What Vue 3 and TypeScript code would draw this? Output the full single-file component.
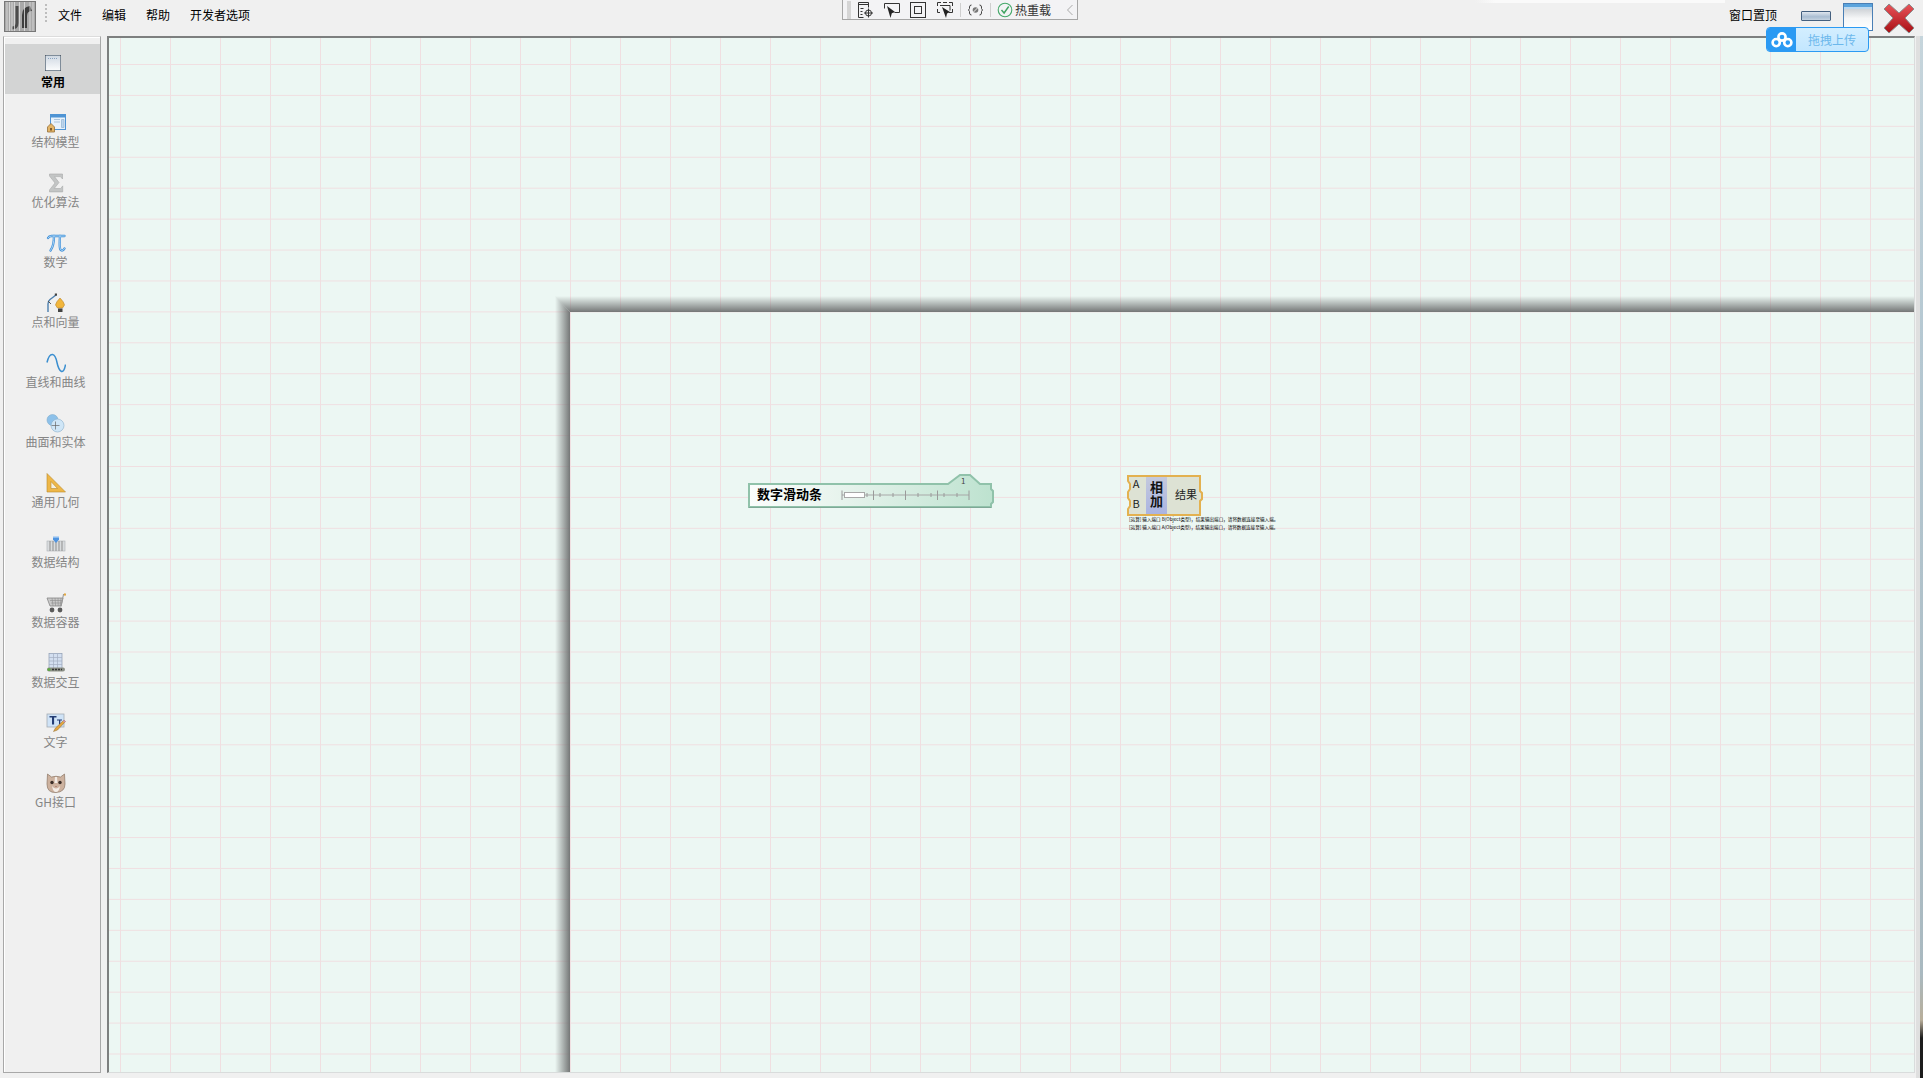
<script setup lang="ts">
const menus = ['文件', '编辑', '帮助', '开发者选项'];

const navItems = [
  { key: 'common', label: '常用' },
  { key: 'model', label: '结构模型' },
  { key: 'sigma', label: '优化算法' },
  { key: 'pi', label: '数学' },
  { key: 'point', label: '点和向量' },
  { key: 'curve', label: '直线和曲线' },
  { key: 'solid', label: '曲面和实体' },
  { key: 'ruler', label: '通用几何' },
  { key: 'struct', label: '数据结构' },
  { key: 'cart', label: '数据容器' },
  { key: 'table', label: '数据交互' },
  { key: 'text', label: '文字' },
  { key: 'cat', label: 'GH接口' },
];

// slider ticks, in px along the node
const majorTicks = [842, 873.5, 905.5, 937.5, 969];
const minorTicks = [867, 880, 893, 918, 931, 944, 957];
</script>

<template>
  <div class="app">
    <header class="topbar">
      <div class="top-left">
        <svg class="logo" width="32" height="31" viewBox="0 0 32 31">
          <rect x="0.5" y="0.5" width="31" height="30" fill="#a9a9a9" stroke="#777" />
          <path d="M13 5v17q0 5-5 5" fill="none" stroke="#4c4c4c" stroke-width="3" />
          <path d="M18 27V14q0-8 8-9l2 5q-5 0-5 5v12z" fill="#3e3e3e" />
          <path d="M3 1v29M5.500 1v29M8 1v29M10.500 1v29M15.500 1v29M20.500 1v29M26 1v29M29 1v29" stroke="#e0e0e0" stroke-width="1" opacity="0.8" />
        </svg>
        <div class="gripper"></div>
        <nav class="menu">
          <span v-for="m in menus" :key="m">{{ m }}</span>
        </nav>
      </div>

      <div class="toolbar">
        <div class="tool-grip"></div>
        <div class="tool-icons">
          <svg width="18" height="18" viewBox="0 0 18 18" fill="none" stroke="#333">
            <path d="M2.500 1.500h10M2.500 3.500h10" />
            <path d="M2.500 1.500v15h5M12.500 1.500v5" />
            <path d="M4.500 7.500h3M4.500 10.500h2M4.500 13.500h2" />
            <circle cx="12.500" cy="12" r="3" />
            <path d="M12.500 7.500v9M8 12h9" />
          </svg>
          <svg width="18" height="18" viewBox="0 0 18 18" fill="none" stroke="#333">
            <path d="M1.500 7.500V2.500h15v9h-5" />
            <path d="M4 5l8 6-3.200 1.200L7.500 17z" fill="#222" stroke="none" />
          </svg>
          <svg width="18" height="18" viewBox="0 0 18 18" fill="none" stroke="#333">
            <rect x="1.500" y="1.500" width="15" height="15" />
            <rect x="5.500" y="5.500" width="7" height="7" />
          </svg>
          <svg width="18" height="18" viewBox="0 0 18 18" fill="none" stroke="#333">
            <path d="M5 1.500H1.500V5M13 1.500h3.500V5M1.500 8v3.500H4M16.500 8v3.500H13M7 1.500h4" />
            <path d="M4 4.500h10v5" />
            <path d="M6 6l8 5-3 1.500-1 4.500z" fill="#222" stroke="none" />
          </svg>
        </div>
        <i class="tool-sep sep-a"></i>
        <svg class="tool-var" width="15" height="18" viewBox="0 0 15 18" fill="none" stroke="#444">
          <path d="M3.500 4Q1.500 4 1.500 6v1.500L.5 9l1 1.500V12q0 2 2 2M11.500 4q2 0 2 2v1.500l1 1.500-1 1.500V12q0 2-2 2" />
          <circle cx="7.500" cy="9" r="2.800" fill="#777" stroke="none" />
          <path d="M5.500 11l4-4" stroke="#eee" />
        </svg>
        <i class="tool-sep sep-b"></i>
        <svg class="tool-check" width="16" height="16" viewBox="0 0 16 16" fill="none">
          <circle cx="8" cy="8" r="6.800" stroke="#45a86a" stroke-width="1.100" />
          <path d="M4.500 8l2.600 3 4.600-6.500" stroke="#3ea35f" stroke-width="1.400" />
        </svg>
        <span class="tool-label">热重载</span>
        <svg class="tool-chev" width="10" height="14" viewBox="0 0 10 14" fill="none" stroke="#aaa">
          <path d="M7.500 2L2.500 7l5 5" />
        </svg>
      </div>

      <div class="top-right">
        <span class="pin-label">窗口置顶</span>
        <div class="win-min"></div>
        <div class="win-max"></div>
        <svg class="win-close" width="32" height="32" viewBox="0 0 32 32">
          <defs>
            <linearGradient id="closeFill" x1="0" y1="0" x2="0" y2="1">
              <stop offset="0" stop-color="#e8545a" />
              <stop offset="1" stop-color="#a80f14" />
            </linearGradient>
          </defs>
          <path d="M6 2l10 9L26 2l5 5-9 9 9 10-5 5-10-9-10 9-5-5 9-10-9-9z" fill="url(#closeFill)" stroke="#8c8c8c" stroke-width="1" />
        </svg>
      </div>

      <div class="top-glow"></div>

      <div class="upload">
        <div class="upload-icon">
          <svg width="22" height="16" viewBox="0 0 22 16" fill="none" stroke="#fff" stroke-width="2.600">
            <circle cx="11" cy="5" r="3.600" />
            <circle cx="5.200" cy="10.600" r="3.600" />
            <circle cx="16.800" cy="10.600" r="3.600" />
          </svg>
        </div>
        <span class="upload-text">拖拽上传</span>
      </div>
    </header>

    <main class="body">
      <aside class="sidebar">
        <div v-for="item in navItems" :key="item.key" class="nav-item" :class="{ active: item.key === 'common' }">
          <svg width="20" height="20" viewBox="0 0 20 20">
            <template v-if="item.key === 'common'">
              <defs>
                <linearGradient id="commonFill" x1="0" y1="0" x2="0" y2="1">
                  <stop offset="0" stop-color="#cfd8e2" />
                  <stop offset="1" stop-color="#fbfcfd" />
                </linearGradient>
              </defs>
              <rect x="2.500" y="2.500" width="15" height="15" fill="url(#commonFill)" stroke="#7f8c99" />
              <path d="M5 5.500h10" stroke="#8aa3bf" stroke-dasharray="1 1" />
              <path d="M2 2h1v1H2zM17 2h1v1h-1zM2 17h1v1H2zM17 17h1v1h-1z" fill="#56616d" />
            </template>
            <template v-else-if="item.key === 'model'">
              <rect x="4.500" y="1.500" width="15" height="15" fill="#e8f2fb" stroke="#4f94d4" />
              <rect x="4.500" y="1.500" width="15" height="3" fill="#4f94d4" />
              <path d="M8 6.500h6M8 9h6M15.500 6.500h2.500v8h-2.500z" stroke="#9cb9d4" fill="#bcd6ee" stroke-width="0.800" />
              <path d="M1.500 14l3.500-3.500 3.500 3.500v5h-7z" fill="#e3b567" stroke="#96703a" stroke-width="0.800" />
              <rect x="4" y="15" width="2" height="2.500" fill="#7d5a2c" />
            </template>
            <template v-else-if="item.key === 'sigma'">
              <path d="M3.500 1h13v5l-2-2.400H8.500L13 9.500l-4.800 6h6.500l2-2.600v6H3.500v-2L9 10 3.500 3z" fill="#c3c5c5" stroke="#a8aaaa" stroke-width="0.600" />
            </template>
            <template v-else-if="item.key === 'pi'">
              <g fill="none" stroke-linecap="round">
                <g stroke="#3f8fd8" stroke-width="2.300">
                  <path d="M2 5q1-2 3.500-2H18.500" />
                  <path d="M8 3Q8 13 4.500 17.500" />
                  <path d="M14 3Q13.500 10 13.800 14q.2 3.500 2.200 3.500 1.500 0 2.500-2" />
                </g>
                <g stroke="#b4daf7" stroke-width="0.900">
                  <path d="M2 5q1-2 3.500-2H18.500" />
                  <path d="M8 3Q8 13 4.500 17.500" />
                  <path d="M14 3Q13.500 10 13.800 14q.2 3.500 2.200 3.500 1.500 0 2.500-2" />
                </g>
              </g>
            </template>
            <template v-else-if="item.key === 'point'">
              <path d="M2 19V11q0-3 2-4.500L10 2" fill="none" stroke="#4c7fae" stroke-width="1.400" />
              <path d="M2 8l3 3" stroke="#555" />
              <rect x="8.800" y="0.500" width="2.200" height="2.200" fill="#444" />
              <path d="M14 5q4 4 4.500 7l-2 3h-5l-2-3q.5-3 4.500-7z" fill="#f2b63c" stroke="#b9832a" stroke-width="0.600" />
              <rect x="12" y="15.500" width="4.500" height="3.500" fill="#444" />
            </template>
            <template v-else-if="item.key === 'curve'">
              <path d="M1 9.500Q3 1 6.500 1.500q3 .5 4.500 8t4.500 9q2.800.2 4-7" fill="none" stroke="#3b8fd0" stroke-width="1.500" />
            </template>
            <template v-else-if="item.key === 'solid'">
              <circle cx="6.500" cy="7" r="5.500" fill="#8dc1ea" stroke="#7faccc" stroke-width="0.600" />
              <circle cx="11.500" cy="12.500" r="6.500" fill="#cfe6f7" stroke="#8ab0cc" stroke-width="0.600" />
              <path d="M9.500 8.500v8M5.500 12.500h8" stroke="#666" stroke-width="0.700" />
            </template>
            <template v-else-if="item.key === 'ruler'">
              <path d="M1 0.500L19.500 19H1z" fill="#eeb748" stroke="#b98a2e" stroke-width="0.600" />
              <path d="M5 8.500L11.500 15.500H5z" fill="#f5f0e0" stroke="#b98a2e" stroke-width="0.600" />
            </template>
            <template v-else-if="item.key === 'struct'">
              <rect x="1" y="8" width="18" height="10" fill="#d9dcde" stroke="#adb2b6" stroke-width="0.600" />
              <path d="M4 8v10M7 8v10M10 8v10M13 8v10M16 8v10" stroke="#8f8f8f" />
              <path d="M7 4.500h6v2L10 10 7 6.500z" fill="#4f94e0" />
              <rect x="7" y="3.500" width="6" height="1.500" fill="#8bbcef" />
            </template>
            <template v-else-if="item.key === 'cart'">
              <path d="M1 5h16l-2 8H4z" fill="#c9c9c9" stroke="#858585" stroke-width="0.800" />
              <path d="M4 7.500h12M5 10h10M6 5l1 8M9 5l.6 8M12 5l.2 8M15 5l-.8 8" stroke="#8d8d8d" stroke-width="0.600" />
              <path d="M15 13.500l2.500-12H19" fill="none" stroke="#999" stroke-width="1.100" />
              <circle cx="19" cy="1.500" r="1.200" fill="#e2a845" />
              <circle cx="6" cy="17" r="2.400" fill="#5a5a5a" />
              <circle cx="14" cy="17" r="2.400" fill="#5a5a5a" />
            </template>
            <template v-else-if="item.key === 'table'">
              <rect x="3" y="0.500" width="13" height="15" fill="#d3dff0" stroke="#8e9cb3" stroke-width="0.700" />
              <path d="M3 4.500h13M3 8h13M3 11.500h13M7.500 1v14M11.500 1v14" stroke="#a3afc2" stroke-width="0.700" />
              <rect x="1" y="14.500" width="18" height="4" rx="2" fill="#8b8f86" />
              <circle cx="3" cy="16.500" r="1.600" fill="#5fa844" />
              <path d="M6 16.500h10" stroke="#333" stroke-dasharray="2 1" stroke-width="1.400" />
            </template>
            <template v-else-if="item.key === 'text'">
              <rect x="1" y="1" width="17" height="13" fill="#cfe3f7" stroke="#a5adb5" stroke-width="0.800" />
              <path d="M3.500 3h7v1.600h-2.400v7H6v-7H3.500zM11 6.500h5v1h-1.700v4H13v-4h-2z" fill="#253d74" />
              <path d="M7.500 18.500l2-3.500 8.500-8 1.500 1.500-8 8.500z" fill="#e5a63f" stroke="#8c6a2d" stroke-width="0.500" />
              <path d="M18 7l1.500 1.500-1 1L17 8z" fill="#c98fc9" />
            </template>
            <template v-else>
              <path d="M1.500 1l4 3q4.500-1.500 9 0l4-3 .5 10q0 8-9 8.500t-9-8.500z" fill="#cdb29f" stroke="#8b7564" stroke-width="0.700" />
              <path d="M9 4h2l.5 6h-3zM6 13q4 5 8 0q-1 6-4 6t-4-6z" fill="#f3ece6" />
              <circle cx="6" cy="9.500" r="1.700" fill="#3a2e28" />
              <circle cx="14" cy="9.500" r="1.700" fill="#3a2e28" />
              <path d="M9 13h2l-1 1z" fill="#9a5a52" />
            </template>
          </svg>
          <span class="nav-label">{{ item.label }}</span>
        </div>
      </aside>

      <section class="canvas">
        <div class="sheet"></div>

        <svg class="node node-slider" width="248" height="38" viewBox="748 472 248 38">
          <defs>
            <linearGradient id="sliderFill" x1="0" y1="0" x2="1" y2="0">
              <stop offset="0" stop-color="#fbfdfc" />
              <stop offset="0.4" stop-color="#e6f3ec" />
              <stop offset="1" stop-color="#bde2cf" />
            </linearGradient>
          </defs>
          <path d="M749 484H948L960 475H970L980 484H991V489L993 491V502L991 504V507H749Z" fill="url(#sliderFill)" stroke="#90c2aa" stroke-width="2" />
          <path d="M749 507.500H991" stroke="#7fa896" stroke-width="1" />
          <text x="757" y="499" class="slider-title">数字滑动条</text>
          <text x="961" y="484" class="slider-value">1</text>
          <path d="M842 495H969" stroke="#a8a8a8" />
          <path v-for="x in majorTicks" :key="x" :d="`M${x} 490.500V500`" stroke="#9a9a9a" />
          <path v-for="x in minorTicks" :key="x" :d="`M${x} 493V497`" stroke="#9a9a9a" />
          <rect x="844.500" y="492.500" width="20" height="5" fill="#fff" stroke="#a8a8a8" />
        </svg>

        <svg class="node node-add" width="80" height="44" viewBox="1125 474 80 44">
          <defs>
            <linearGradient id="addMid" x1="0" y1="0" x2="0" y2="1">
              <stop offset="0" stop-color="#c4c9dd" />
              <stop offset="1" stop-color="#aab4e2" />
            </linearGradient>
          </defs>
          <path d="M1128 476H1200V491L1202 493V499L1200 501V515H1128V509L1130 506V501L1128 498V492L1130 489V484L1128 481Z" fill="#dde2d4" stroke="#e3b150" stroke-width="2" />
          <rect x="1146" y="477" width="21" height="37" fill="url(#addMid)" />
          <text x="1136" y="488" class="port">A</text>
          <text x="1136" y="508" class="port">B</text>
          <text x="1156.500" y="495" class="add-title">相加</text>
          <text x="1186" y="499" class="add-out">结果</text>
        </svg>

        <div class="hint">
          <p>[运算] 输入端口 B(Object类型)，结果输出端口，请将数据连接至输入端。</p>
          <p>[运算] 输入端口 A(Object类型)，结果输出端口，请将数据连接至输入端。</p>
        </div>
      </section>
    </main>

    <div class="edge"></div>
  </div>
</template>

<style scoped>
.app {
  position: relative;
  display: flex;
  flex-direction: column;
  height: 1078px;
  overflow: hidden;
  background: #f0f0f0;
  font-family: "Noto Sans CJK SC", "Liberation Sans", sans-serif;
  font-size: 12px;
  color: #000;
}

.topbar {
  position: relative;
  z-index: 2;
  display: flex;
  height: 36px;
  flex-shrink: 0;
}

.top-left {
  display: flex;
  align-items: flex-start;
  width: 842px;
  padding-left: 4px;
  box-sizing: border-box;
}

.logo {
  margin-top: 1px;
}

.gripper {
  width: 2px;
  height: 18px;
  margin: 4px 0 0 9px;
  background: repeating-linear-gradient(to bottom, #bdbdbd 0 2px, transparent 2px 4px);
}

.menu {
  display: flex;
  gap: 20px;
  margin-left: 11px;
  line-height: 30px;
}

.toolbar {
  display: flex;
  align-items: center;
  width: 236px;
  height: 20px;
  box-sizing: border-box;
  border: 1px solid #a6a6a6;
  border-top: none;
  background: #f3f3f5;
}

.tool-grip {
  width: 4px;
  height: 18px;
  margin: 0 5px 0 4px;
  background: radial-gradient(circle at 1px 1px, #c4c4c4 0.6px, transparent 0.9px) 0 0 / 2px 2px;
}

.tool-icons {
  display: flex;
  gap: 8.5px;
}

.tool-sep {
  width: 1px;
  height: 14px;
  background: #cfcfcf;
}

.sep-a {
  margin: 0 7px 0 6.5px;
}

.sep-b {
  margin: 0 6px 0 7px;
}

.tool-label {
  margin-left: 2px;
  color: #333;
}

.tool-chev {
  margin-left: 14px;
}

.top-right {
  display: flex;
  flex: 1;
  justify-content: flex-end;
  align-items: flex-start;
  padding-right: 8px;
}

.pin-label {
  margin-right: 24px;
  line-height: 30px;
}

.win-min {
  width: 30px;
  height: 10px;
  margin: 11px 12px 0 0;
  box-sizing: border-box;
  border: 1px solid #45607f;
  border-radius: 1px;
  background: linear-gradient(to bottom, #dfe6ee, #a9bdd2 60%, #c4d2e0);
}

.win-max {
  width: 30px;
  height: 28px;
  margin: 3px 10px 0 0;
  box-sizing: border-box;
  border: 1px solid #4a7fb5;
  background: linear-gradient(to bottom, #5ba4dd 0 3px, #bcd9f0 3px 5px, #cfd3d7 5px, #f5f6f7 55%, #fff);
}

.win-close {
  margin-top: 2px;
}

.top-glow {
  position: absolute;
  top: 0;
  left: 1475px;
  width: 250px;
  height: 3px;
  background: linear-gradient(to right, #f0f0f0, #fafafa 8%);
}

.upload {
  position: absolute;
  top: 27px;
  right: 54px;
  display: flex;
  width: 103px;
  height: 25px;
  box-sizing: border-box;
  border: 1px solid #2b9af3;
  border-radius: 4px;
  overflow: hidden;
  background: linear-gradient(to bottom, #d3eeff, #c3e7ff);
}

.upload-icon {
  display: flex;
  align-items: center;
  justify-content: center;
  width: 29px;
  background: #2b9af3;
}

.upload-text {
  flex: 1;
  text-align: center;
  line-height: 23px;
  color: #6cb8ec;
}

.body {
  display: flex;
  flex: 1;
  padding: 0 8px 5px 3px;
  min-height: 0;
}

.sidebar {
  width: 98px;
  margin-right: 6px;
  padding-top: 7px;
  box-sizing: border-box;
  border: 1px solid #a8a8a8;
  border-top-color: #dcdcdc;
  box-shadow: inset 1px 1px 0 #fff;
  background: #f0f0f0;
}

.nav-item {
  display: flex;
  flex-direction: column;
  align-items: center;
  height: 50px;
  margin: 0 0 10px 1px;
  padding: 9px 0 0 6px;
  box-sizing: border-box;
}

.nav-item.active {
  padding-left: 1px;
  background: #d3d4d4;
}

.nav-item svg {
  display: block;
}

.nav-label {
  line-height: 18px;
  color: #858585;
  white-space: nowrap;
}

.active .nav-label {
  color: #000;
  font-weight: 700;
}

.canvas {
  position: relative;
  flex: 1;
  border-style: solid;
  border-width: 2px 1px 1px 2px;
  border-color: #7d7f7f #d9dcdc #d9dcdc #7d7f7f;
  background-color: #ecf7f3;
  background-image:
    linear-gradient(to right, #f0dfe1 1px, transparent 1px),
    linear-gradient(to bottom, #f0dfe1 1px, transparent 1px);
  background-size: 50px 30.93px;
  background-position: 11px 26px;
}

.sheet {
  position: absolute;
  left: 461px;
  top: 274px;
  right: 0;
  bottom: 0;
}

.sheet::before {
  content: "";
  position: absolute;
  left: -15px;
  top: -16px;
  right: 0;
  height: 16px;
  background: linear-gradient(to bottom, rgba(110, 112, 112, 0), rgba(110, 112, 112, 0.95));
  clip-path: polygon(0 0, 100% 0, 100% 100%, 15px 100%);
}

.sheet::after {
  content: "";
  position: absolute;
  left: -15px;
  top: -16px;
  bottom: 0;
  width: 15px;
  background: linear-gradient(to right, rgba(110, 112, 112, 0), rgba(110, 112, 112, 0.95));
  clip-path: polygon(0 0, 100% 16px, 100% 100%, 0 100%);
}

.node {
  position: absolute;
}

.node-slider {
  left: 639px;
  top: 434px;
}

.node-add {
  left: 1016px;
  top: 436px;
}

.slider-title {
  font-size: 13px;
  font-weight: 700;
  fill: #000;
}

.slider-value {
  font-size: 8px;
  fill: #444;
}

.port {
  font-size: 11px;
  text-anchor: middle;
  fill: #222;
}

.add-title {
  font-size: 13px;
  font-weight: 700;
  letter-spacing: 1px;
  text-anchor: middle;
  writing-mode: vertical-rl;
  fill: #111;
}

.add-out {
  font-size: 11px;
  text-anchor: middle;
  fill: #222;
}

.hint {
  position: absolute;
  left: 1020px;
  top: 477px;
  width: 150px;
  font-size: 4.6px;
  line-height: 8px;
  color: #000;
}

.hint p {
  margin: 0;
  white-space: nowrap;
}

.edge {
  position: absolute;
  top: 36px;
  right: 0;
  bottom: 0;
  width: 3px;
  border-left: 4px solid #dfdfdf;
  background: linear-gradient(to bottom, #c6d5dc 0, #b5c8d2 30%, #a9b9c0 90%, #b8ae9a 984px, #1c1c1c 1002px);
}
</style>
